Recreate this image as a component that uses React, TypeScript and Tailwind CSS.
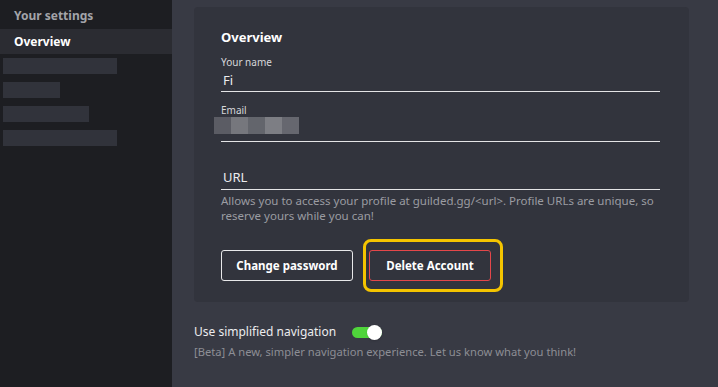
import React from 'react';

const sans = { fontFamily: '"Noto Sans", "Open Sans", Arial, sans-serif' };

function Field({ label, children, first, h }: { label?: string; children: React.ReactNode; first?: boolean; h: string }) {
  return (
    <div className={first ? 'mt-[9px]' : 'mt-[12px]'}>
      {label && <div className="h-[13px] text-[10px] leading-[13px] text-[#d6d7da]">{label}</div>}
      <div className={`flex ${h} items-center border-b border-[#e4e4e6] text-[13px] text-[#ececee]`}>{children}</div>
    </div>
  );
}

export default function App() {
  const blocks = ['#5b5c64', '#76777d', '#63656c', '#7d7e84', '#66676f'];

  return (
    <div className="flex h-[387px] w-[718px] overflow-hidden bg-[#383a44]" style={sans}>
      <aside className="flex w-[172px] flex-col bg-[#1d1e22]">
        <div className="flex h-[29px] items-center px-[14px] pt-[3px] text-[12px] font-bold text-[#a3a4a9]">Your settings</div>
        <div className="flex h-[25px] items-center bg-[#2b2c32] px-[14px] text-[12px] font-bold text-white">Overview</div>
        <div className="mt-[4px] flex flex-col gap-[8px] pl-[3px]">
          <div className="h-[16px] w-[114px] bg-[#31333b]" />
          <div className="h-[16px] w-[57px] bg-[#31333b]" />
          <div className="h-[16px] w-[86px] bg-[#31333b]" />
          <div className="h-[16px] w-[114px] bg-[#31333b]" />
        </div>
      </aside>

      <main className="flex-1 pl-[22px] pr-[29px] pt-[7px]">
        <section className="rounded-[4px] bg-[#32343d] pb-[21px] pl-[27px] pr-[29px] pt-[21px]">
          <h2 className="h-[19px] text-[13px] font-bold leading-[19px] text-white">Overview</h2>

          <Field label="Your name" first h="h-[23px]">
            <span className="pl-[2px] pt-[2px]">Fi</span>
          </Field>

          <Field label="Email" h="h-[25px]">
            <div className="-ml-[7px] flex h-[17px] self-start">
              {blocks.map((c, i) => (
                <div key={i} className="h-[17px] w-[17px]" style={{ backgroundColor: c }} />
              ))}
            </div>
          </Field>

          <div className="mt-[24px] flex h-[24px] items-center border-b border-[#e4e4e6] pl-[2px] text-[13px] text-[#ececee]">URL</div>

          <p className="mt-[4px] text-[11.5px] leading-[14.5px] text-[#9b9ca2]">
            Allows you to access your profile at guilded.gg/&lt;url&gt;. Profile URLs are unique, so reserve yours while you can!
          </p>

          <div className="mt-[27px] flex gap-[16px]">
            <button className="h-[31px] w-[132px] rounded-[3px] border border-[#e8e8ea] text-[11.5px] font-bold text-white">Change password</button>
            <div className="relative">
              <button className="h-[31px] w-[122px] rounded-[3px] border border-[#e4474a] text-[11.5px] font-bold text-white">Delete Account</button>
              <div className="pointer-events-none absolute -bottom-[11px] -left-[6px] -right-[12px] -top-[11px] rounded-[8px] border-[3px] border-[#f4c400]" />
            </div>
          </div>
        </section>

        <div className="mt-[21px] flex items-center">
          <span className="text-[12px] text-[#ececee]">Use simplified navigation</span>
          <div className="relative ml-[16px] h-[11px] w-[30px] rounded-full bg-[#4fd43b]">
            <div className="absolute -top-[2px] right-0 h-[15px] w-[15px] rounded-full bg-white shadow" />
          </div>
        </div>
        <p className="mt-[3px] text-[11.2px] text-[#8d8e95]">[Beta] A new, simpler navigation experience. Let us know what you think!</p>
      </main>
    </div>
  );
}
